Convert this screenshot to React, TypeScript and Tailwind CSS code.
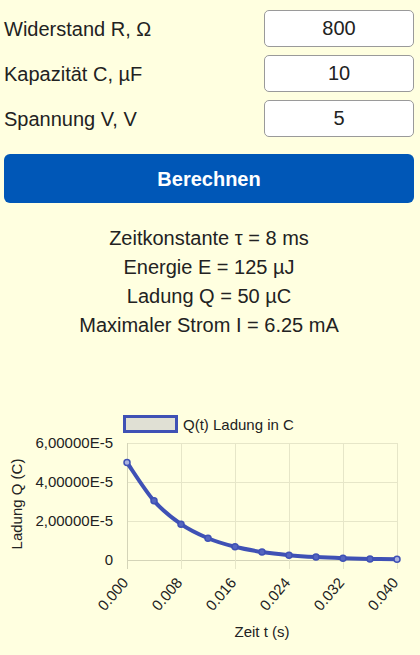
import React from "react";

const FONT = '"Liberation Sans", Arial, sans-serif';

const rows = [
  { label: "Widerstand R, Ω", value: "800" },
  { label: "Kapazität C, µF", value: "10" },
  { label: "Spannung V, V", value: "5" },
];

const X0 = 127;
const X1 = 397;
const Y0 = 444;
const Y1 = 561;
const OFF = 341;

function Chart() {
  const pts: [number, number][] = [];
  for (let i = 0; i <= 10; i++) {
    const t = i * 0.004;
    const q = 5e-5 * Math.exp(-t / 0.008);
    const x = X0 + (t / 0.04) * (X1 - X0);
    const y = Y1 - (q / 6e-5) * (Y1 - Y0);
    pts.push([x, y]);
  }
  let d = `M ${pts[0][0]} ${pts[0][1]}`;
  for (let i = 0; i < pts.length - 1; i++) {
    const p0 = pts[Math.max(0, i - 1)];
    const p1 = pts[i];
    const p2 = pts[i + 1];
    const p3 = pts[Math.min(pts.length - 1, i + 2)];
    const c1x = p1[0] + (p2[0] - p0[0]) / 6;
    const c1y = p1[1] + (p2[1] - p0[1]) / 6;
    const c2x = p2[0] - (p3[0] - p1[0]) / 6;
    const c2y = p2[1] - (p3[1] - p1[1]) / 6;
    d += ` C ${c1x} ${c1y} ${c2x} ${c2y} ${p2[0]} ${p2[1]}`;
  }
  const grid = "#e6e6c8";
  const axis = "#d4d4b8";
  const yTicks = [
    { v: "6,00000E-5", y: 444 },
    { v: "4,00000E-5", y: 483 },
    { v: "2,00000E-5", y: 522 },
    { v: "0", y: 561 },
  ];
  const xTicks = [0, 1, 2, 3, 4, 5].map((i) => ({
    x: X0 + i * 54,
    label: (i * 0.008).toFixed(3),
  }));
  return (
    <svg width="420" height={655 - OFF} className="block" style={{ fontFamily: FONT }}>
      <g transform={`translate(0,-${OFF})`}>
        <rect x="124.5" y="417.5" width="52" height="15" fill="#e0e0d4" stroke="#3f51b5" strokeWidth="3" />
        <text x="183" y="430.5" fontSize="15" fill="#222">
          Q(t) Ladung in C
        </text>
        {yTicks.map((t) => (
          <line key={t.v} x1={X0} x2={X1} y1={t.y + 0.5} y2={t.y + 0.5} stroke={t.v === "0" ? axis : grid} strokeWidth="1" />
        ))}
        {xTicks.map((t, i) => (
          <line key={t.label} x1={t.x + 0.5} x2={t.x + 0.5} y1={Y0} y2={Y1 + 9} stroke={i === 0 ? axis : grid} strokeWidth="1" />
        ))}
        {yTicks.map((t) => (
          <text key={t.v} x="113" y={t.y + 5} fontSize="15" fill="#222" textAnchor="end">
            {t.v}
          </text>
        ))}
        {xTicks.map((t) => (
          <text
            key={t.label}
            x={t.x + 2}
            y={584}
            fontSize="15"
            fill="#222"
            textAnchor="end"
            transform={`rotate(-50 ${t.x + 2} 584)`}
          >
            {t.label}
          </text>
        ))}
        <text x="22" y="505" fontSize="15" fill="#222" textAnchor="middle" transform="rotate(-90 22 505)">
          Ladung Q (C)
        </text>
        <text x="262" y="638" fontSize="15" fill="#222" textAnchor="middle">
          Zeit t (s)
        </text>
        <path d={d} fill="none" stroke="#3f51b5" strokeWidth="4" strokeLinejoin="round" />
        {pts.map((p, i) => (
          <circle
            key={i}
            cx={p[0]}
            cy={p[1]}
            r="3"
            fill={i === 0 || i === pts.length - 1 ? "#aab2e0" : "#5566c0"}
            stroke="#3f51b5"
            strokeWidth="1.5"
          />
        ))}
      </g>
    </svg>
  );
}

export default function App() {
  return (
    <div className="min-h-[655px] w-[420px] bg-[#ffffe0] text-[#222]" style={{ fontFamily: FONT }}>
      <div className="pl-1 pr-[6px] pt-[10px]">
        <div className="flex flex-col gap-2">
          {rows.map((r) => (
            <div key={r.label} className="flex h-[37px] items-center justify-between">
              <span className="text-[20px] leading-none">{r.label}</span>
              <input
                readOnly
                value={r.value}
                className="h-[37px] w-[150px] rounded-[5px] border border-[#9a9a9a] bg-white text-center text-[20px] text-[#222] outline-none"
                style={{ fontFamily: FONT }}
              />
            </div>
          ))}
        </div>
        <button
          className="mt-[17px] flex h-[49px] w-full items-center justify-center rounded-[6px] bg-[#0057b7] text-[20px] font-bold text-white"
          style={{ fontFamily: FONT }}
        >
          Berechnen
        </button>
        <div className="mt-[21px] text-center text-[20px] leading-[29px]">
          <div>Zeitkonstante τ = 8 ms</div>
          <div>Energie E = 125 µJ</div>
          <div>Ladung Q = 50 µC</div>
          <div>Maximaler Strom I = 6.25 mA</div>
        </div>
      </div>
      <Chart />
    </div>
  );
}
